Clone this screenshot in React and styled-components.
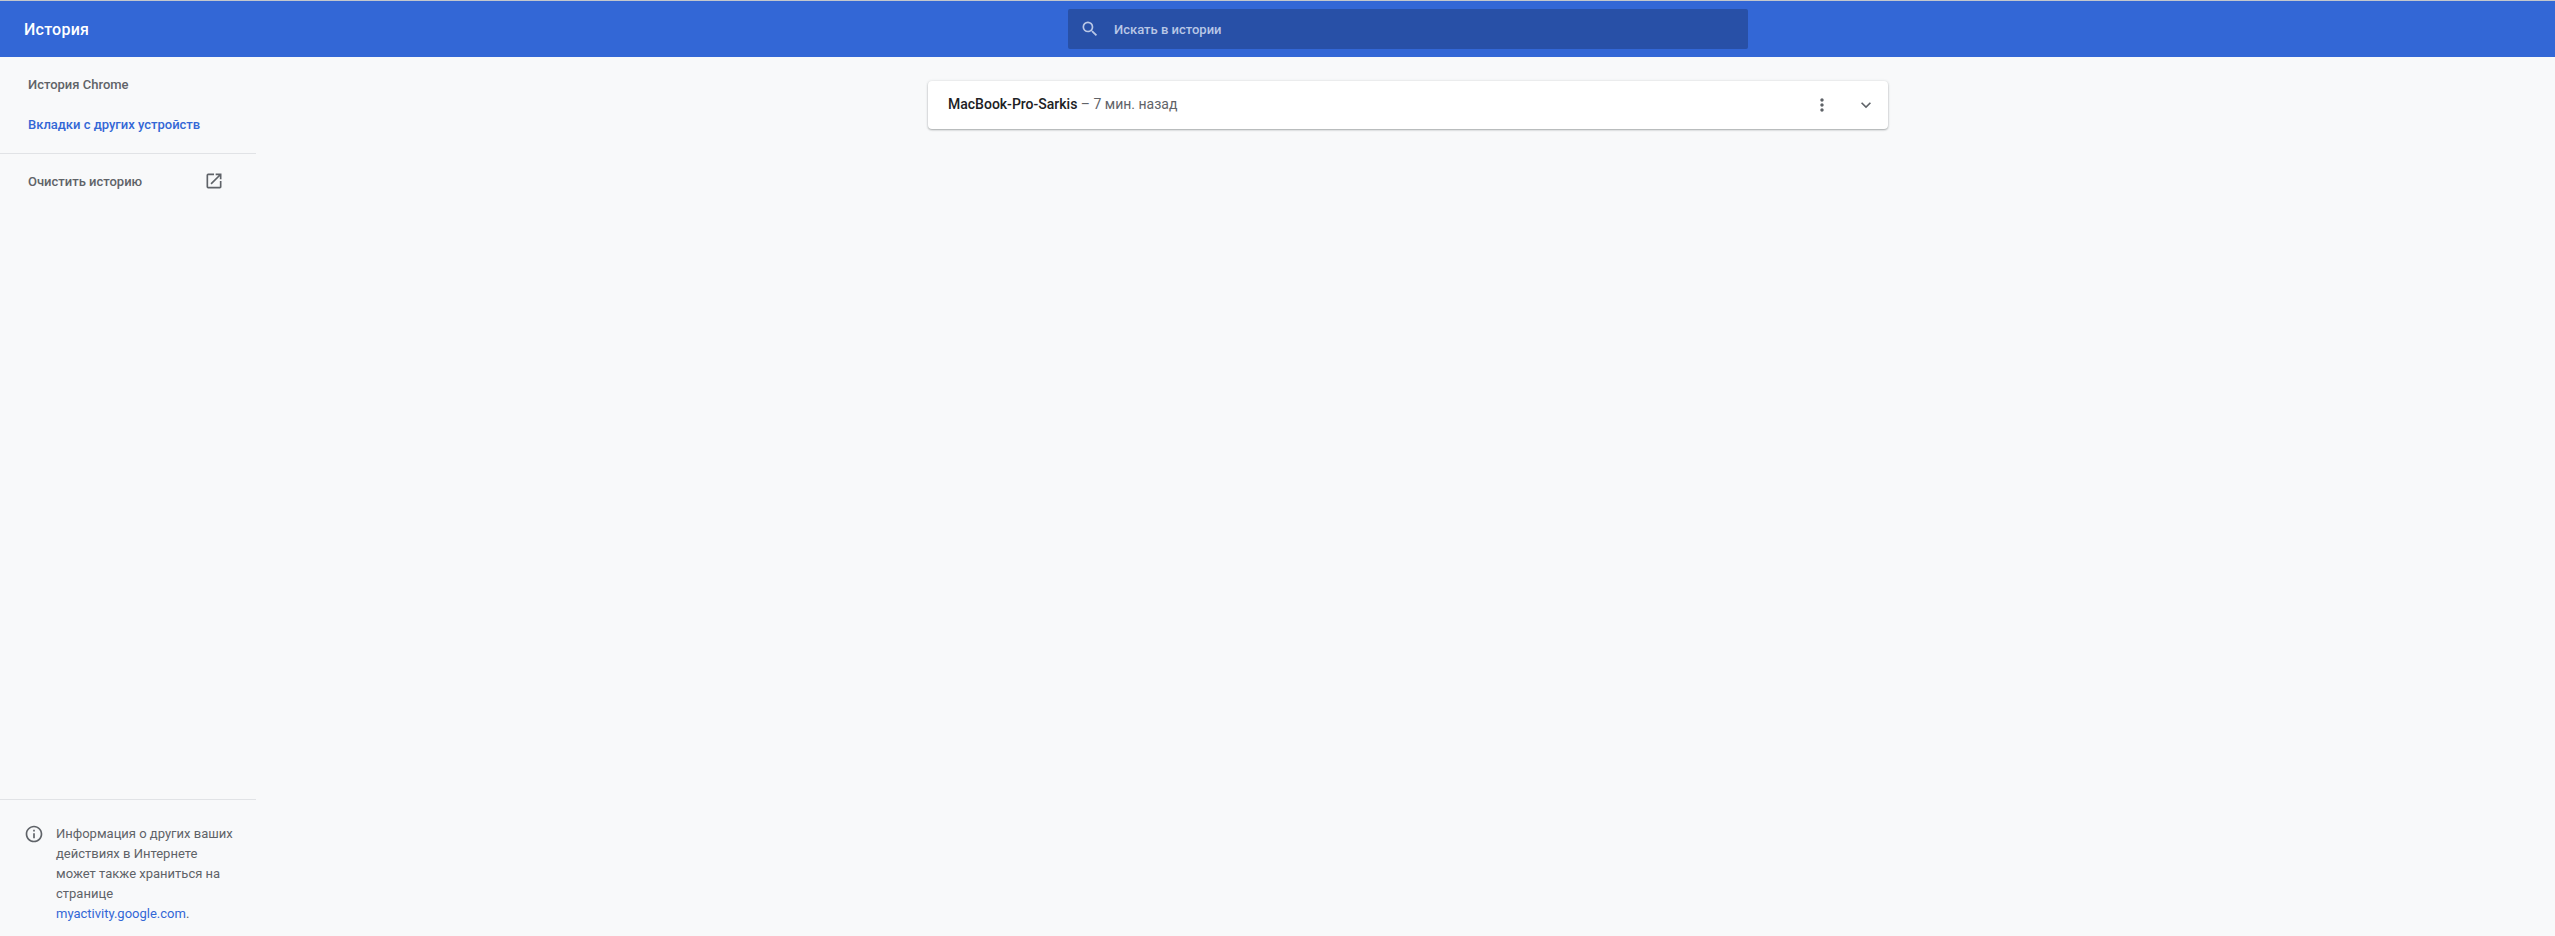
import React from "react";
import styled, { createGlobalStyle } from "styled-components";

const Global = createGlobalStyle`
  html, body {
    margin: 0;
    height: 100%;
    background: #f8f9fa;
  }
  body {
    font-family: Roboto, "Liberation Sans", sans-serif;
    font-size: 13px;
    color: #5f6368;
  }
`;

const Page = styled.div`
  display: flex;
  flex-direction: column;
  height: 936px;
  overflow: hidden;
`;

const TopLine = styled.div`
  height: 1px;
  background: #c4c7cc;
`;

const Toolbar = styled.header`
  display: grid;
  grid-template-columns: 1068px 680px 1fr;
  align-items: center;
  height: 56px;
  background: #3367d6;
  color: #fff;
`;

const Title = styled.h1`
  margin: 0;
  padding-left: 24px;
  font-size: 16px;
  font-weight: 500;
  letter-spacing: 0.25px;
`;

const Search = styled.div`
  display: flex;
  align-items: center;
  height: 40px;
  border-radius: 2px;
  background: #2850a7;
  color: #b9c7e6;
  padding-left: 12px;
  gap: 14px;
  font-weight: 500;
`;

const Body = styled.div`
  display: flex;
  flex: 1;
  min-height: 0;
`;

const Sidebar = styled.nav`
  display: flex;
  flex-direction: column;
  width: 256px;
  flex-shrink: 0;
`;

const NavList = styled.div`
  display: flex;
  flex-direction: column;
  padding-top: 7px;
  padding-bottom: 9px;
  border-bottom: 1px solid #e1e3e6;
`;

const NavItem = styled.div`
  display: flex;
  align-items: center;
  height: 40px;
  padding-left: 28px;
  font-weight: 500;
  color: ${(p) => (p.$active ? "#3367d6" : "#5f6368")};
`;

const ClearRow = styled.div`
  display: flex;
  align-items: center;
  justify-content: space-between;
  height: 40px;
  margin-top: 7px;
  padding: 0 32px 0 28px;
  font-weight: 500;
`;

const Footer = styled.div`
  display: flex;
  gap: 12px;
  margin-top: auto;
  padding: 24px 16px 0 24px;
  height: 112px;
  border-top: 1px solid #e1e3e6;
  line-height: 20px;
`;

const FooterIcon = styled.svg`
  flex-shrink: 0;
`;

const Link = styled.a`
  color: #3367d6;
  text-decoration: none;
`;

const Main = styled.main`
  flex: 1;
  display: flex;
  flex-direction: column;
  align-items: center;
  padding: 24px 0 0 5px;
`;

const Card = styled.section`
  display: flex;
  align-items: center;
  justify-content: space-between;
  box-sizing: border-box;
  width: 960px;
  height: 48px;
  padding: 0 10px 0 20px;
  background: #fff;
  border-radius: 4px;
  box-shadow: 0 1px 2px rgba(60, 64, 67, 0.4), 0 0 3px rgba(60, 64, 67, 0.12);
`;

const Device = styled.div`
  font-size: 14px;
  padding-bottom: 2px;
`;

const DeviceName = styled.span`
  color: #202124;
  font-weight: 500;
`;

const Actions = styled.div`
  display: flex;
  align-items: center;
  gap: 20px;
`;

const IconSlot = styled.div`
  display: flex;
  align-items: center;
  justify-content: center;
  width: 24px;
  height: 24px;
`;

const App = () => {
  return (
    <Page>
      <Global />
      <TopLine />
      <Toolbar>
        <Title>История</Title>
        <Search>
          <svg width="20" height="20" viewBox="0 0 24 24" fill="#b9c7e6">
            <path d="M15.5 14h-.79l-.28-.27A6.47 6.47 0 0 0 16 9.5 6.5 6.5 0 1 0 9.5 16c1.61 0 3.09-.59 4.23-1.57l.27.28v.79l5 4.99L20.49 19l-4.99-5zm-6 0C7.01 14 5 11.99 5 9.5S7.01 5 9.5 5 14 7.01 14 9.5 11.99 14 9.5 14z" />
          </svg>
          Искать в истории
        </Search>
        <div />
      </Toolbar>
      <Body>
        <Sidebar>
          <NavList>
            <NavItem>История Chrome</NavItem>
            <NavItem $active>Вкладки с других устройств</NavItem>
          </NavList>
          <ClearRow>
            Очистить историю
            <svg width="20" height="20" viewBox="0 0 24 24" fill="#5f6368">
              <path d="M19 19H5V5h7V3H5a2 2 0 0 0-2 2v14a2 2 0 0 0 2 2h14c1.1 0 2-.9 2-2v-7h-2v7zM14 3v2h3.59l-9.83 9.83 1.41 1.41L19 6.41V10h2V3h-7z" />
            </svg>
          </ClearRow>
          <Footer>
            <FooterIcon width="20" height="20" viewBox="0 0 24 24" fill="#5f6368">
              <path d="M11 7h2v2h-2zm0 4h2v6h-2zm1-9C6.48 2 2 6.48 2 12s4.48 10 10 10 10-4.48 10-10S17.52 2 12 2zm0 18c-4.41 0-8-3.59-8-8s3.59-8 8-8 8 3.59 8 8-3.59 8-8 8z" />
            </FooterIcon>
            <div>
              Информация о других ваших действиях в Интернете может также храниться на странице{" "}
              <Link>myactivity.google.com</Link>.
            </div>
          </Footer>
        </Sidebar>
        <Main>
          <Card>
            <Device>
              <DeviceName>MacBook-Pro-Sarkis</DeviceName> – 7 мин. назад
            </Device>
            <Actions>
              <IconSlot>
                <svg width="20" height="20" viewBox="0 0 24 24" fill="#5f6368">
                  <path d="M12 8c1.1 0 2-.9 2-2s-.9-2-2-2-2 .9-2 2 .9 2 2 2zm0 2c-1.1 0-2 .9-2 2s.9 2 2 2 2-.9 2-2-.9-2-2-2zm0 6c-1.1 0-2 .9-2 2s.9 2 2 2 2-.9 2-2-.9-2-2-2z" />
                </svg>
              </IconSlot>
              <IconSlot>
                <svg width="20" height="20" viewBox="0 0 24 24" fill="#5f6368">
                  <path d="M7.41 8.59 12 13.17l4.59-4.58L18 10l-6 6-6-6z" />
                </svg>
              </IconSlot>
            </Actions>
          </Card>
        </Main>
      </Body>
    </Page>
  );
};

export default App;
